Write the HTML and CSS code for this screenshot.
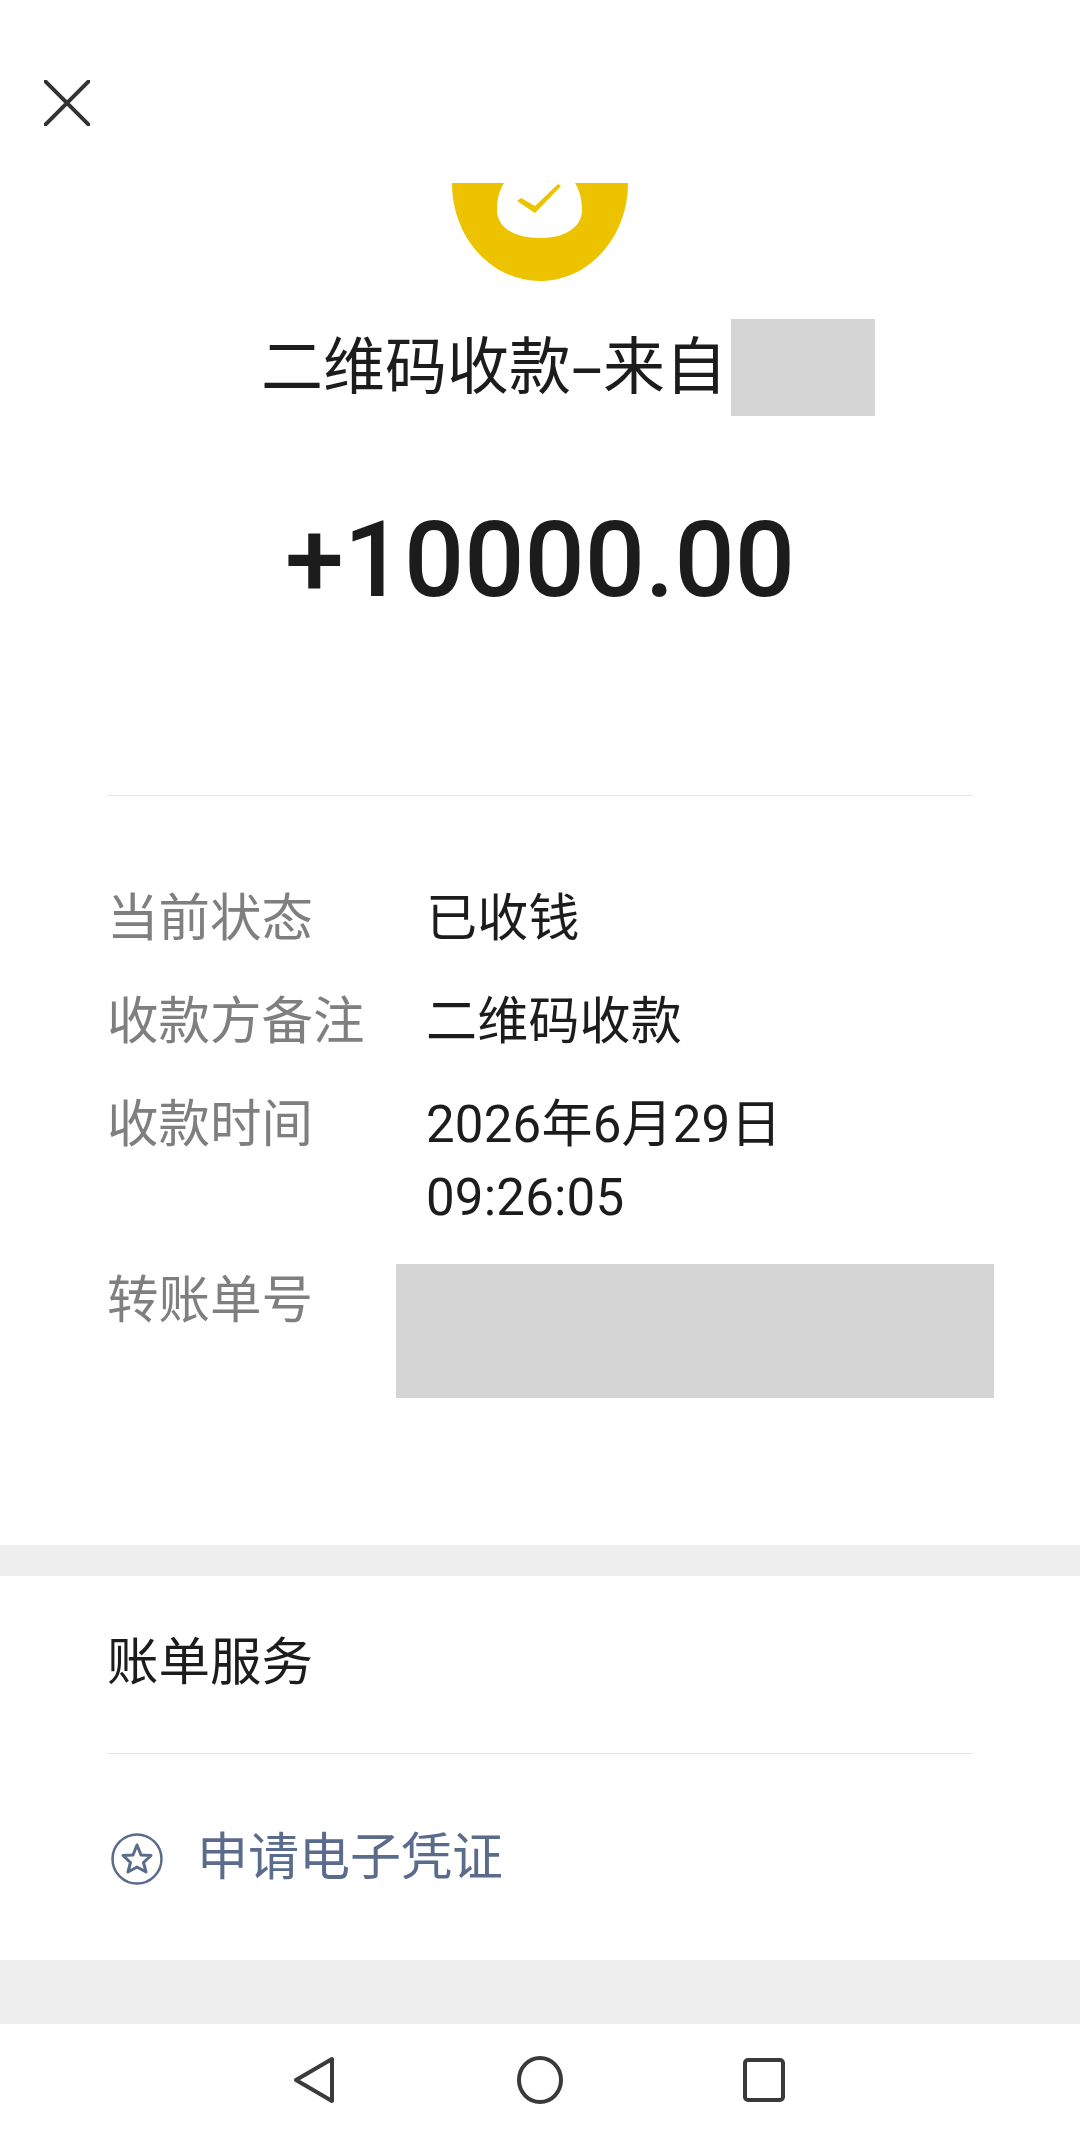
FILE: index.html
```html
<html>
  <head>
    <title>收款详情</title>
    <link rel="stylesheet" href="styles.css">
  </head>
  <body>
    <div class="page">
      <div class="topbar">
        <svg class="close-icon" width="46" height="46" viewBox="0 0 46 46">
          <path d="M1 1 L45 45 M45 1 L1 45" fill="none" stroke="#333" stroke-width="4" stroke-linecap="round"/>
        </svg>
      </div>
      <svg class="logo" width="176" height="98" viewBox="0 0 176 98">
        <path d="M0 0 H52 C47 8 45 17 45 27 C45 45 63 55 88 55 C112 55 130 45 130 27 C130 17 128 8 123 0 H176 C176 54 137 98 88 98 C39 98 0 54 0 0 Z" fill="#edc300"/>
        <path d="M65 18 L69 15 L83 23 L106 1 L109 3 L83 30 Z" fill="#edc300"/>
      </svg>
      <div class="title-row">
        <span class="title">二维码收款<span class="dash">-</span>来自</span>
        <div class="mask mask-name"></div>
      </div>
      <div class="amount">+10000.00</div>
      <div class="line"></div>
      <div class="details">
        <div class="row">
          <div class="label">当前状态</div>
          <div class="value">已收钱</div>
        </div>
        <div class="row">
          <div class="label">收款方备注</div>
          <div class="value">二维码收款</div>
        </div>
        <div class="row">
          <div class="label">收款时间</div>
          <div class="value">2026年6月29日<br>09:26:05</div>
        </div>
        <div class="row">
          <div class="label">转账单号</div>
          <div class="mask mask-number"></div>
        </div>
      </div>
      <div class="band band-small"></div>
      <div class="services">账单服务</div>
      <div class="line"></div>
      <div class="voucher">
        <svg class="voucher-icon" width="52" height="52" viewBox="0 0 52 52">
          <circle cx="26" cy="26" r="24.5" fill="none" stroke="#5a6b8c" stroke-width="2.5"/>
          <path d="M26 12 L30 22 L40 22.5 L32.5 29.5 L35 39 L26 34 L17 39 L19.5 29.5 L12 22.5 L22 22 Z" fill="none" stroke="#5a6b8c" stroke-width="3" stroke-linejoin="round"/>
        </svg>
        <span class="voucher-text">申请电子凭证</span>
      </div>
      <div class="band band-big"></div>
      <div class="navbar">
        <svg width="42" height="48" viewBox="0 0 42 48">
          <path d="M39 3 V45 L3 24 Z" fill="none" stroke="#3a3a3a" stroke-width="4" stroke-linejoin="round"/>
        </svg>
        <svg class="nav-home" width="46" height="48" viewBox="0 0 46 48">
          <ellipse cx="23" cy="24" rx="21" ry="22" fill="none" stroke="#3a3a3a" stroke-width="4"/>
        </svg>
        <svg width="42" height="44" viewBox="0 0 42 44">
          <rect x="2" y="2" width="38" height="40" rx="3" fill="none" stroke="#3a3a3a" stroke-width="4"/>
        </svg>
      </div>
    </div>
  </body>
</html>
```

FILE: styles.css
```css
html,
body {
  margin: 0;
  padding: 0;
  background-color: #FFF;
}
.page {
  width: 1080px;
  height: 2136px;
  overflow: hidden;
  color: #1C1C1C;
  font-family: Roboto, "Noto Sans CJK SC", sans-serif;
}
.topbar {
  height: 183px;
  padding-left: 44px;
  box-sizing: border-box;
  padding-top: 80px;
}
.close-icon {
  display: block;
}
.logo {
  display: block;
  margin: 0 auto;
}
.title-row {
  display: flex;
  align-items: center;
  height: 97px;
  margin-top: 38px;
  padding-left: 261px;
}
.title {
  width: 470px;
  font-size: 62px;
  line-height: 97px;
  white-space: nowrap;
}
.dash {
  display: inline-block;
  width: 32px;
  text-align: center;
  transform: scaleX(1.8);
}
.mask {
  background-color: #D5D5D5;
}
.mask-name {
  width: 144px;
  height: 97px;
}
.amount {
  height: 379px;
  padding-top: 84px;
  box-sizing: border-box;
  font-size: 106px;
  font-weight: 500;
  line-height: 120px;
  text-align: center;
}
.line {
  height: 1px;
  margin: 0 107px;
  background-color: #E6E6E6;
}
.details {
  display: flex;
  flex-direction: column;
  gap: 30px;
  height: 749px;
  box-sizing: border-box;
  padding: 86px 0 0 107px;
  font-size: 51.5px;
  line-height: 73px;
}
.row {
  display: flex;
}
.label {
  width: 319px;
  color: #7F7F7F;
}
.value {
  font-size: 51px;
  letter-spacing: 0.2px;
}
.mask-number {
  width: 598px;
  height: 134px;
  margin-left: -30px;
}
.band {
  background-color: #EEE;
}
.band-small {
  height: 31px;
}
.band-big {
  height: 64px;
}
.services {
  height: 177px;
  box-sizing: border-box;
  padding: 50px 0 0 107px;
  font-size: 51.5px;
  line-height: 73px;
}
.voucher {
  display: flex;
  align-items: center;
  gap: 34px;
  height: 206px;
  padding-left: 111px;
  font-size: 51px;
  color: #5A6B8C;
}
.voucher-icon {
  margin-top: 3px;
}
.voucher-text {
  margin-bottom: 8px;
}
.navbar {
  display: flex;
  align-items: center;
  justify-content: space-between;
  height: 112px;
  box-sizing: border-box;
  padding: 0 295px 0 293px;
}
.navbar svg {
  display: block;
}
.nav-home {
  margin-left: 2px;
}
```
